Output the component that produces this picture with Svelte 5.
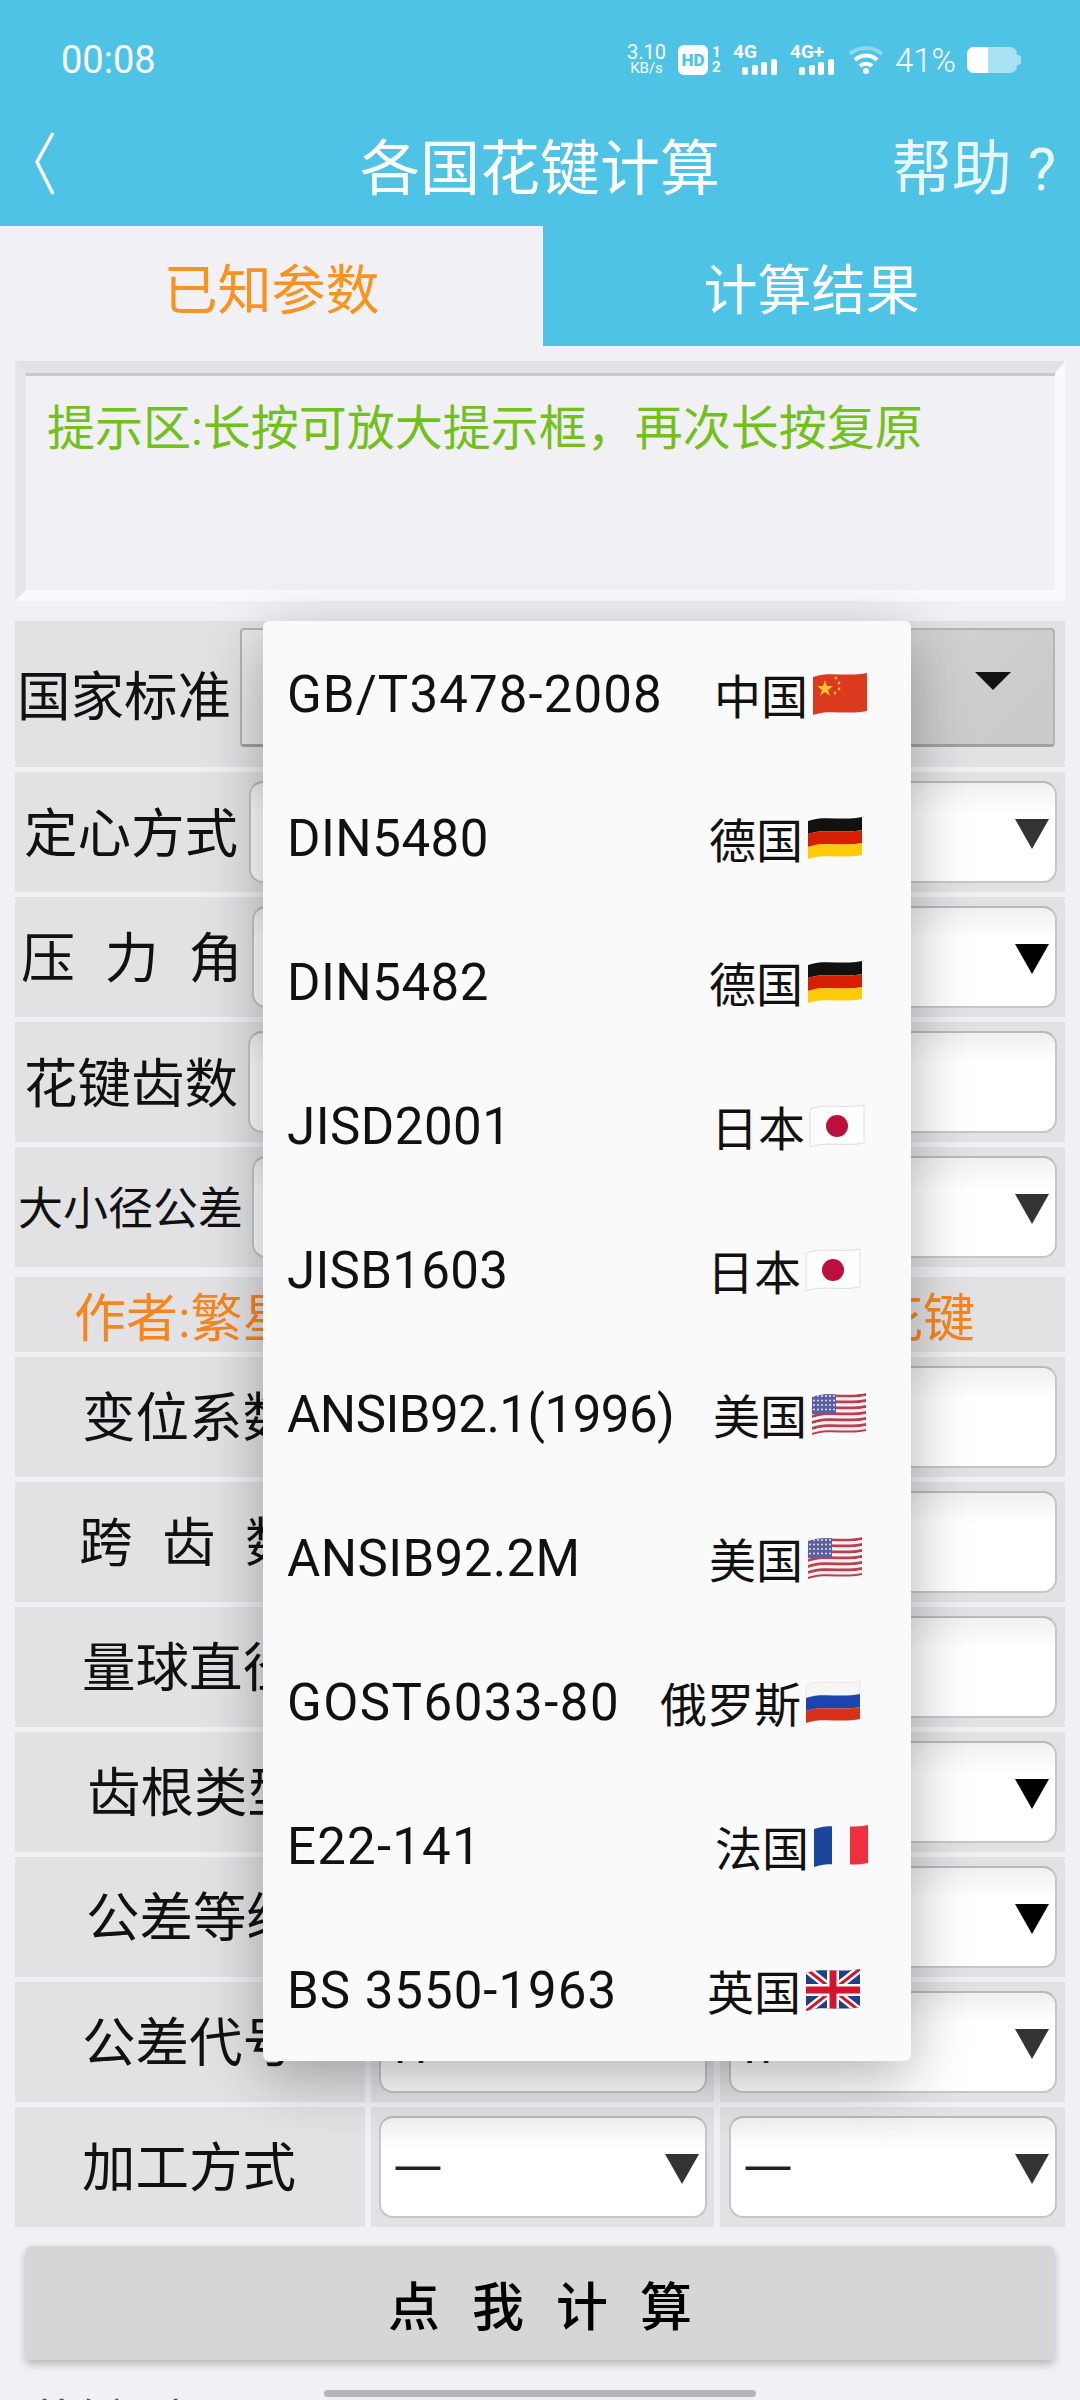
<script>
    const topRows = [
        { label: "国家标准", w: 225, pad: 2, size: 53.5, kind: "spinner" },
        { label: "定心方式", w: 234, pad: 9, size: 53.5, arrow: "#333" },
        { label: "压  力  角", w: 237, pad: 6, size: 54, arrow: "#000", spaced: true },
        { label: "花键齿数", w: 233, pad: 9, size: 53.5 },
        { label: "大小径公差", w: 237, pad: 3, size: 45, arrow: "#333" },
    ];

    const lowRows = [
        { label: "变位系数", pad: 67 },
        { label: "跨  齿  数", pad: 64, spaced: true },
        { label: "量球直径", pad: 67 },
        { label: "齿根类型", pad: 72, arrow: "#000" },
        { label: "公差等级", pad: 71, arrow: "#000" },
        { label: "公差代号", pad: 67, arrow: "#333", a: "H", b: "h" },
        { label: "加工方式", pad: 67, arrow: "#333", a: "—", b: "—" },
    ];

    const standards = [
        { name: "GB/T3478-2008", ls: 1.1, country: "中国", flag: "cn", end: 43 },
        { name: "DIN5480", ls: 0.5, country: "德国", flag: "de", end: 48 },
        { name: "DIN5482", ls: 0.5, country: "德国", flag: "de", end: 48 },
        { name: "JISD2001", ls: 0.5, country: "日本", flag: "jp", end: 46 },
        { name: "JISB1603", ls: 0.3, country: "日本", flag: "jp", end: 50 },
        { name: "ANSIB92.1(1996)", ls: -0.5, country: "美国", flag: "us", end: 44 },
        { name: "ANSIB92.2M", ls: 0.4, country: "美国", flag: "us", end: 48 },
        { name: "GOST6033-80", ls: 1.5, country: "俄罗斯", flag: "ru", end: 50 },
        { name: "E22-141", ls: 1.2, country: "法国", flag: "fr", end: 42 },
        { name: "BS 3550-1963", ls: 1, country: "英国", flag: "uk", end: 50 },
    ];

    // a flag stripe with the same wavy edges as the emoji flags
    function band(y0, y1) {
        return `M1 ${y0 + 3}C16 ${y0 - 3} 36 ${y0 + 3} 55 ${y0 - 1}L55 ${y1 - 1}C36 ${y1 + 3} 16 ${y1 - 3} 1 ${y1 + 3}Z`;
    }

    const usStripes = Array.from({ length: 13 }, (_, i) => i);
    const usStars = Array.from({ length: 24 }, (_, i) => i);
</script>

{#snippet arrow(color)}
    <svg class="arrow" viewBox="0 0 34 30" width="34" height="30">
        <path d="M0 0H34L17 30Z" fill={color} />
    </svg>
{/snippet}

{#snippet flag(code, i)}
    <svg class="flag" viewBox="0 0 56 44" width="56" height="44">
        <defs>
            <clipPath id="wave{i}"><path d={band(2, 40)} /></clipPath>
        </defs>
        {#if code === "cn"}
            <path d={band(2, 40)} fill="#dc3a1e" />
            <path d="M13 8l2 6h6l-5 4 2 6-5-4-5 4 2-6-5-4h6z" fill="#fbc02d" />
            <circle cx="24" cy="6" r="1.4" fill="#fbc02d" />
            <circle cx="27" cy="11" r="1.4" fill="#fbc02d" />
            <circle cx="27" cy="17" r="1.4" fill="#fbc02d" />
            <circle cx="23" cy="21" r="1.4" fill="#fbc02d" />
        {:else if code === "de"}
            <path d={band(2, 15)} fill="#111" />
            <path d={band(15, 28)} fill="#d81e05" />
            <path d={band(28, 40)} fill="#fdcb0a" />
        {:else if code === "jp"}
            <path d={band(2, 40)} fill="#fdfdfd" stroke="#dedede" stroke-width="1" />
            <circle cx="28" cy="22" r="11" fill="#bc0f3c" />
        {:else if code === "us"}
            <g clip-path="url(#wave{i})">
                {#each usStripes as s}
                    <path d={band(2 + s * 3, 5 + s * 3)} fill={s % 2 ? "#f4f0f0" : "#b8404f"} />
                {/each}
                <rect x="0" y="0" width="25" height="22" fill="#5b5f9f" />
                {#each usStars as s}
                    <circle cx={3 + (s % 6) * 4} cy={4 + Math.floor(s / 6) * 4.5} r="1" fill="#e4e4f0" />
                {/each}
            </g>
        {:else if code === "ru"}
            <path d={band(2, 15)} fill="#f6f6f6" stroke="#ddd" stroke-width="0.6" />
            <path d={band(15, 28)} fill="#1c44ac" />
            <path d={band(28, 40)} fill="#d8301a" />
        {:else if code === "fr"}
            <g clip-path="url(#wave{i})">
                <rect x="0" y="0" width="19" height="44" fill="#1c469c" />
                <rect x="19" y="0" width="18" height="44" fill="#fafafa" />
                <rect x="37" y="0" width="19" height="44" fill="#ee2f3d" />
            </g>
        {:else}
            <g clip-path="url(#wave{i})">
                <rect x="0" y="0" width="56" height="44" fill="#1f3f86" />
                <path d="M0 0L56 44M56 0L0 44" stroke="#fff" stroke-width="8" />
                <path d="M0 0L56 44M56 0L0 44" stroke="#d2152e" stroke-width="3" />
                <path d="M28 0V44M0 22H56" stroke="#fff" stroke-width="12" />
                <path d="M28 0V44M0 22H56" stroke="#d2152e" stroke-width="7" />
            </g>
        {/if}
    </svg>
{/snippet}

<div class="page">
    <header>
        <div class="status">
            <span class="time">00:08</span>
            <div class="icons">
                <div class="speed"><span>3.10</span><small>KB/s</small></div>
                <div class="hd">HD</div>
                <div class="sims"><span>1</span><span>2</span></div>
                <div class="signal">
                    <span class="net">4G</span>
                    <svg viewBox="0 0 35 16" width="35" height="16">
                        <rect x="0" y="8" width="6" height="8" rx="2" fill="#fff" />
                        <rect x="10" y="6" width="6" height="10" rx="2" fill="#fff" />
                        <rect x="19" y="3" width="6" height="13" rx="2" fill="#fff" />
                        <rect x="29" y="0" width="6" height="16" rx="2" fill="#fff" />
                    </svg>
                </div>
                <div class="signal second">
                    <span class="net">4G+</span>
                    <svg viewBox="0 0 35 16" width="35" height="16">
                        <rect x="0" y="8" width="6" height="8" rx="2" fill="#fff" />
                        <rect x="10" y="6" width="6" height="10" rx="2" fill="#fff" />
                        <rect x="19" y="3" width="6" height="13" rx="2" fill="#fff" />
                        <rect x="29" y="0" width="6" height="16" rx="2" fill="#fff" />
                    </svg>
                </div>
                <svg class="wifi" viewBox="0 0 36 30" width="36" height="30" fill="none">
                    <path d="M2 9C11 1 25 1 34 9" stroke="#fff" stroke-opacity="0.35" stroke-width="4" />
                    <path d="M7 15C13 9 23 9 29 15" stroke="#fff" stroke-width="4" />
                    <path d="M12 21C15 18 21 18 24 21" stroke="#fff" stroke-width="4" />
                    <circle cx="18" cy="26" r="3" fill="#fff" />
                </svg>
                <span class="pct">41%</span>
                <div class="battery"><div class="level"></div></div>
            </div>
        </div>
        <div class="titlebar">
            <div class="back">
                <svg viewBox="0 0 22 64" width="22" height="64" fill="none">
                    <path d="M19 1L3 30L19 62" stroke="#fff" stroke-width="3.5" />
                </svg>
            </div>
            <h1>各国花键计算</h1>
            <div class="help">帮助<span class="qm">?</span></div>
        </div>
        <div class="tabs">
            <div class="tab active">已知参数</div>
            <div class="tab">计算结果</div>
        </div>
    </header>

    <div class="hint">
        <div class="hint-inner">提示区:长按可放大提示框，再次长按复原</div>
    </div>

    <div class="form">
        {#each topRows as r, i}
            <div class="row" class:first={i === 0}>
                <div class="label" class:spaced={r.spaced} style="width:{r.w}px;padding-left:{r.pad}px;font-size:{r.size}px">{r.label}</div>
                {#if r.kind === "spinner"}
                    <div class="spinner">
                        <svg viewBox="0 0 36 18" width="36" height="18"><path d="M0 0H36L18 18Z" fill="#111" /></svg>
                    </div>
                {:else}
                    <div class="input">
                        {#if r.arrow}{@render arrow(r.arrow)}{/if}
                    </div>
                {/if}
            </div>
        {/each}

        <div class="author">
            <span>作者:繁星</span>
            <span>花键</span>
        </div>

        {#each lowRows as r}
            <div class="low">
                <div class="low-label" class:spaced={r.spaced} style="padding-left:{r.pad}px">{r.label}</div>
                <div class="cell">
                    <div class="input">
                        {#if r.a}<span class="value" class:dash={r.a === "—"}>{r.a}</span>{/if}
                        {#if r.arrow}{@render arrow(r.arrow)}{/if}
                    </div>
                </div>
                <div class="cell last">
                    <div class="input">
                        {#if r.b}<span class="value" class:dash={r.b === "—"}>{r.b}</span>{/if}
                        {#if r.arrow}{@render arrow(r.arrow)}{/if}
                    </div>
                </div>
            </div>
        {/each}
    </div>

    <button class="calc">点我计算</button>

    <div class="result">
        <span class="r-left">花键型:</span>
        <span class="r-mid">100×0.5</span>
        <span class="r-right">30P×4H4</span>
    </div>

    <div class="scrollbar"></div>

    <div class="menu">
        {#each standards as s, i}
            <div class="item" style="padding-right:{s.end}px">
                <span class="name" style="letter-spacing:{s.ls}px">{s.name}</span>
                <span class="country">{s.country}{@render flag(s.flag, i)}</span>
            </div>
        {/each}
    </div>
</div>

<style>
    :global(body) {
        margin: 0;
    }

    .page {
        position: relative;
        width: 1080px;
        height: 2400px;
        overflow: hidden;
        background: #f0f0f5;
        font-family: Roboto, "Noto Sans CJK SC", sans-serif;
        color: #111;
    }

    header {
        background: #4fc3e5;
        color: #fff;
    }

    .status {
        display: flex;
        justify-content: space-between;
        align-items: center;
        height: 120px;
        padding: 0 63px 0 61px;
        box-sizing: border-box;
    }

    .time {
        font-size: 38px;
    }

    .icons {
        display: flex;
        align-items: center;
        height: 32px;
    }

    .speed {
        display: flex;
        flex-direction: column;
        align-items: center;
        line-height: 16px;
        font-size: 20px;
        width: 37px;
    }

    .speed small {
        font-size: 15px;
    }

    .hd {
        width: 30px;
        height: 30px;
        margin-left: 13px;
        border-radius: 6px;
        background: #fff;
        color: #4fc3e5;
        font-size: 17px;
        font-weight: 900;
        line-height: 30px;
        text-align: center;
    }

    .sims {
        display: flex;
        flex-direction: column;
        margin-left: 4px;
        font-size: 15px;
        font-weight: 700;
        line-height: 15px;
        width: 12px;
    }

    .signal {
        position: relative;
        width: 45px;
        height: 30px;
        margin-left: 9px;
    }

    .signal.second {
        margin-left: 12px;
    }

    .signal .net {
        position: absolute;
        top: -2px;
        left: 0;
        font-size: 19px;
        font-weight: 700;
        line-height: 18px;
    }

    .signal svg {
        position: absolute;
        left: 9px;
        bottom: 0;
    }

    .wifi {
        margin-left: 13px;
    }

    .pct {
        margin-left: 11px;
        font-size: 33px;
        font-weight: 300;
    }

    .battery {
        position: relative;
        width: 50px;
        height: 26px;
        margin-left: 11px;
        border-radius: 7px;
        background: rgba(255, 255, 255, 0.5);
    }

    .battery::after {
        content: "";
        position: absolute;
        right: -4px;
        top: 8px;
        width: 4px;
        height: 10px;
        border-radius: 0 3px 3px 0;
        background: rgba(255, 255, 255, 0.5);
    }

    .level {
        width: 21px;
        height: 26px;
        border-radius: 7px 0 0 7px;
        background: #fff;
    }

    .titlebar {
        display: grid;
        grid-template-columns: 1fr auto 1fr;
        align-items: center;
        height: 106px;
        padding: 0 24px 36px;
        box-sizing: border-box;
    }

    .back {
        display: flex;
        margin-left: 10px;
    }

    h1 {
        margin: 0;
        font-size: 60px;
        font-weight: 400;
    }

    .help {
        justify-self: end;
        font-size: 60px;
        color: #e8f7fb;
    }

    .qm {
        margin-left: 16px;
    }

    .tabs {
        display: flex;
        height: 120px;
    }

    .tab {
        display: flex;
        align-items: center;
        justify-content: center;
        flex: 1;
        font-size: 54px;
    }

    .tab.active {
        flex: 0 0 543px;
        background: #f0f0f5;
        color: #f7931e;
    }

    .hint {
        height: 240px;
        margin: 15px 15px 0;
        box-sizing: border-box;
        border-top: 12px solid #e2e2e6;
        border-left: 11px solid #e6e6ea;
        border-right: 10px solid #fafafc;
        border-bottom: 11px solid #fafafc;
    }

    .hint-inner {
        height: 100%;
        box-sizing: border-box;
        padding: 21px 0 0 21px;
        border-top: 3px solid #c8c8cd;
        color: #72c11a;
        font-size: 48px;
        line-height: 64px;
    }

    .form {
        display: flex;
        flex-direction: column;
        gap: 5px;
        margin: 20px 15px 0;
    }

    .row {
        display: flex;
        align-items: center;
        height: 120px;
        padding-right: 8px;
        background: #e2e2e4;
    }

    .row.first {
        height: 146px;
        align-items: flex-start;
        padding-top: 7px;
        box-sizing: border-box;
        padding-right: 10px;
    }

    .label {
        flex: none;
        box-sizing: border-box;
        white-space: pre;
        padding-top: 6px;
        line-height: 114px;
    }

    .row.first .label {
        padding-top: 0;
        line-height: 140px;
    }

    .spaced {
        letter-spacing: 1px;
    }

    .spinner {
        display: flex;
        align-items: center;
        justify-content: flex-end;
        flex: 1;
        height: 119px;
        padding: 0 42px 12px 0;
        box-sizing: border-box;
        border: 2px solid #b4b4b4;
        border-bottom: 3px solid #a0a0a0;
        border-radius: 4px;
        background: linear-gradient(135deg, #e9e9e9, #c9c9c9);
    }

    .input {
        display: flex;
        align-items: center;
        flex: 1;
        height: 102px;
        box-sizing: border-box;
        padding: 0 6px 0 12px;
        border: 2px solid #c6c6c6;
        border-top-color: #b9b9b9;
        border-radius: 14px;
        background: linear-gradient(#f0f0f0, #fff 32%);
    }

    .arrow {
        margin: 4px 0 0 auto;
    }

    .value {
        font-family: "Noto Sans CJK SC", sans-serif;
        font-size: 48px;
        line-height: 1;
        color: #222;
    }

    .value.dash {
        font-size: 56px;
        padding-bottom: 14px;
    }

    .author {
        display: flex;
        justify-content: space-between;
        align-items: center;
        height: 75px;
        margin-top: 5px;
        padding: 0 90px 0 59px;
        background: #e2e2e4;
        color: #f5861f;
        font-size: 52px;
    }

    .low {
        display: grid;
        grid-template-columns: 350px 343px 345px;
        grid-template-rows: 120px;
        gap: 6px;
        height: 120px;
    }

    .low-label {
        background: #e2e2e4;
        font-size: 53.5px;
        line-height: 124px;
        white-space: pre;
    }

    .cell {
        display: flex;
        align-items: center;
        padding: 0 7px 0 8px;
        background: #e2e2e4;
    }

    .cell.last {
        padding: 0 8px 0 9px;
    }

    .calc {
        display: block;
        width: 1028px;
        height: 114px;
        margin: 19px 0 0 26px;
        padding: 0 0 0 32px;
        border: none;
        border-radius: 6px 6px 3px 3px;
        background: #d5d6d6;
        box-shadow: 0 4px 8px rgba(0, 0, 0, 0.25);
        font-family: inherit;
        font-size: 52px;
        font-weight: 500;
        letter-spacing: 32px;
        color: #000;
    }

    .result {
        display: flex;
        align-items: flex-start;
        position: relative;
        margin: 36px 15px 0;
        font-size: 52px;
        line-height: 60px;
        color: #555;
    }

    .r-left {
        width: 350px;
        padding-left: 12px;
        box-sizing: border-box;
    }

    .r-mid {
        width: 458px;
        padding-left: 8px;
        box-sizing: border-box;
        font-weight: 500;
    }

    .r-right {
        font-weight: 500;
    }

    .scrollbar {
        position: absolute;
        left: 324px;
        bottom: 3px;
        width: 432px;
        height: 7px;
        border-radius: 4px;
        background: #b4b4b9;
    }

    .menu {
        position: absolute;
        left: 263px;
        top: 621px;
        width: 648px;
        border-radius: 6px;
        background: #fafafb;
        box-shadow: 0 16px 60px rgba(0, 0, 0, 0.3);
    }

    .item {
        display: flex;
        justify-content: space-between;
        align-items: center;
        height: 144px;
        padding-left: 24px;
        box-sizing: border-box;
        font-size: 47px;
        color: #111;
    }

    .name {
        padding-top: 3px;
        font-size: 51px;
    }

    .country {
        display: flex;
        align-items: center;
    }

    .flag {
        flex: none;
        margin: 2px 0 0 4px;
    }
</style>
